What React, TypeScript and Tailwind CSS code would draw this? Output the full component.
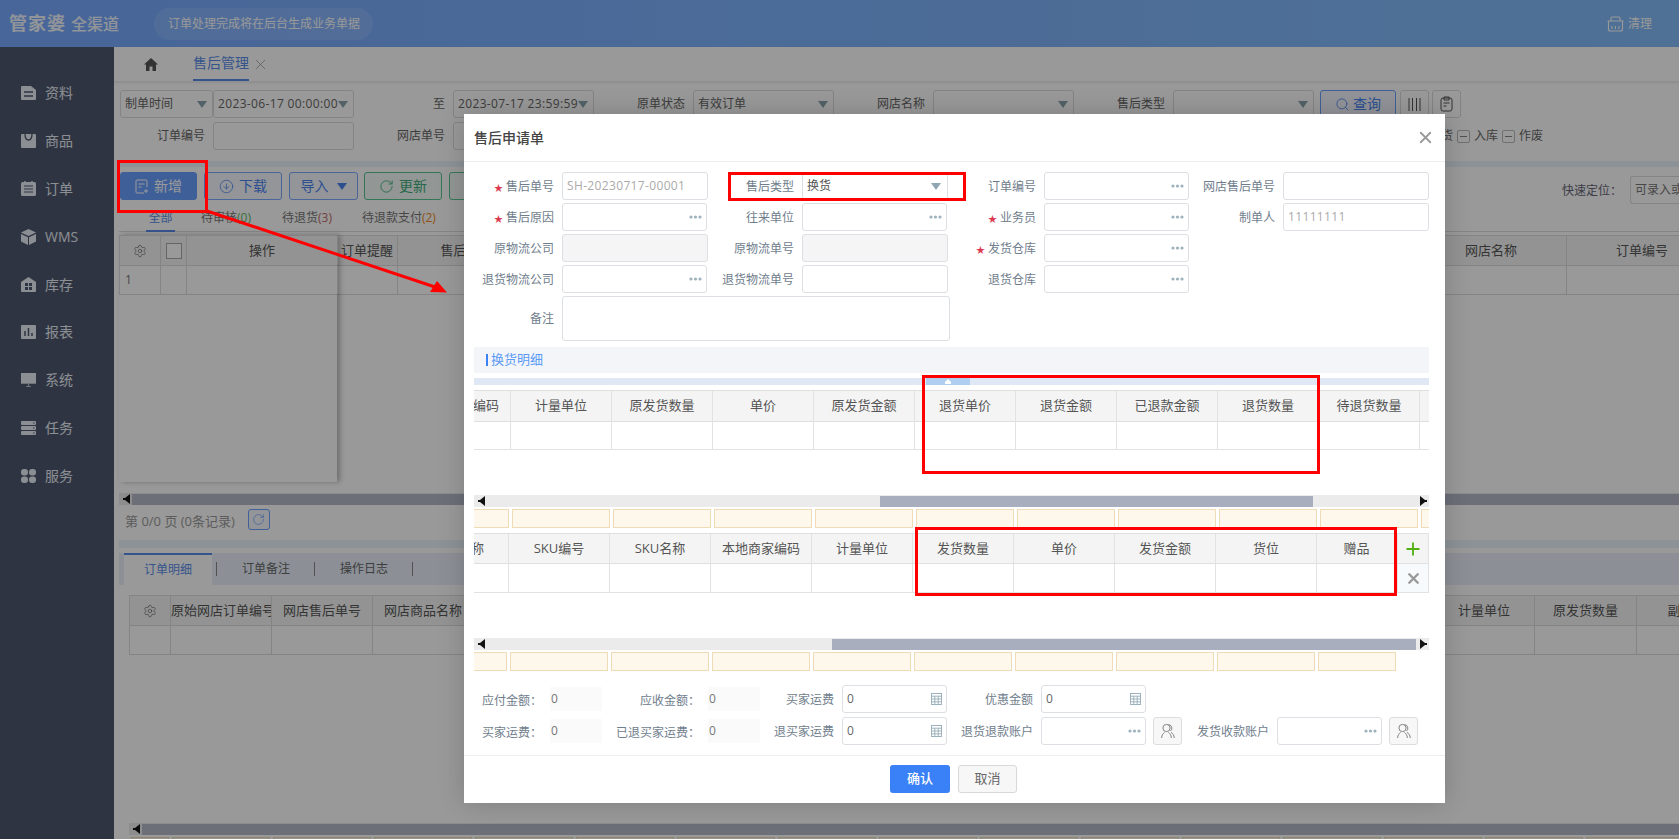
import React from "react";
import { X, Plus, Search, RotateCw, CircleArrowDown, Settings } from "lucide-react";

const Tri = ({ cls = "text-[#8fa6b3]" }: { cls?: string }) => (
  <svg width="10" height="7" viewBox="0 0 10 7" className={cls}><path d="M0 0h10L5 7z" fill="currentColor" /></svg>
);
const Dots = () => (
  <svg width="13" height="4" viewBox="0 0 13 4" className="text-[#9db2bd]"><circle cx="2" cy="2" r="1.6" fill="currentColor" /><circle cx="6.5" cy="2" r="1.6" fill="currentColor" /><circle cx="11" cy="2" r="1.6" fill="currentColor" /></svg>
);
const Calc = () => (
  <svg width="11" height="12" viewBox="0 0 11 12" className="text-[#9db2bd]" fill="none" stroke="currentColor"><rect x=".5" y=".5" width="10" height="11" /><path d="M.5 3.2h10M.5 6h10M.5 8.8h10M3.8 3.2v8.3M7.2 3.2v8.3" /></svg>
);
const People = () => (
  <svg width="14" height="16" viewBox="0 0 14 16" fill="none" stroke="#777" strokeWidth=".9"><circle cx="5.5" cy="5" r="3.6" /><path d="M7.5 1.6a3.6 3.6 0 0 1 2 6.4M.6 15c.2-3 1.6-4.7 3-5.6M7.4 9.4c1.4.9 2.8 2.6 3 5.6M10 9.4c1.7.9 3 2.6 3.3 5.6" /></svg>
);
const Arrow = ({ right }: { right?: boolean }) => (
  <svg width="8" height="10" viewBox="0 0 8 10" className={right ? "rotate-180" : ""}><path d="M0 4h2L7 0v10L2 6H0z" fill="#111" /></svg>
);
const Gear = () => <Settings size={14} strokeWidth={1} className="text-[#555]" />;

const SideIcon = ({ k }: { k: number }) => {
  const bg = "#4e586e";
  const g = [
    <g key="0"><path d="M1 1h9l5 4v9a1 1 0 0 1-1 1H1a1 1 0 0 1-1-1V2a1 1 0 0 1 1-1z" fill="currentColor" /><path d="M3 7h9M3 11h9" stroke={bg} strokeWidth="1.6" /></g>,
    <g key="1"><rect y="1" width="15" height="14" rx="1" fill="currentColor" /><path d="M4 1c0 4 1.5 6 3.5 6S11 5 11 1" fill="none" stroke={bg} strokeWidth="1.3" /></g>,
    <g key="2"><rect y="1" width="15" height="14" rx="1.5" fill="currentColor" /><path d="M3 5h9M3 8h9M3 11h9" stroke={bg} strokeWidth="1.2" /><path d="M4 0v2M11 0v2" stroke="currentColor" strokeWidth="1.5" /></g>,
    <g key="3"><path d="M7.5 0L15 3.5 7.5 7 0 3.5z" fill="currentColor" /><path d="M0 5l7 3.3V16L0 12.5zM15 5L8 8.3V16l7-3.5z" fill="currentColor" /></g>,
    <g key="4"><path d="M7.5 0L15 5v9a1 1 0 0 1-1 1H1a1 1 0 0 1-1-1V5z" fill="currentColor" /><path d="M4 6h3v3H4zM8 6h3v3H8zM4 10h3v3H4zM8 10h3v3H8z" fill={bg} /></g>,
    <g key="5"><rect y="1" width="15" height="14" rx="1" fill="currentColor" /><path d="M4 12V7M7.5 12V4M11 12V9" stroke={bg} strokeWidth="1.5" /></g>,
    <g key="6"><path d="M0 1h15v10H0z" fill="currentColor" /><path d="M0 11.5h15M5 14.5h5M7.5 12v2" stroke="currentColor" strokeWidth="1.2" opacity=".7" /></g>,
    <g key="7"><rect y="1" width="15" height="4" rx="1" fill="currentColor" /><rect y="6" width="15" height="4" rx="1" fill="currentColor" /><rect y="11" width="15" height="4" rx="1" fill="currentColor" /><path d="M12 3h1.5M12 8h1.5M12 13h1.5" stroke={bg} /></g>,
    <g key="8"><rect x="0" y="1" width="7" height="6.5" rx="3" fill="currentColor" /><rect x="8" y="1" width="7" height="6.5" rx="3" fill="currentColor" /><rect x="0" y="8.5" width="7" height="6.5" rx="3" fill="currentColor" /><rect x="8" y="8.5" width="7" height="6.5" rx="3" fill="currentColor" /></g>,
  ];
  return <svg width="15" height="16" viewBox="0 0 15 16" className="shrink-0">{g[k]}</svg>;
};

const BgBox = ({ w, text, arrow, latin }: { w: string; text?: string; arrow?: boolean; latin?: boolean }) => (
  <div className={`${w} h-[28px] shrink-0 border border-[#ddd] rounded-[3px] bg-white flex items-center justify-between pl-[4px] pr-[5px] text-xs text-[#666] whitespace-nowrap`}>
    <span className={latin ? "tracking-[0.35px]" : ""}>{text}</span>
    {arrow && <Tri cls="text-[#8aa3b0]" />}
  </div>
);
const BgLabel = ({ w, t }: { w: string; t: string }) => (
  <div className={`${w} shrink-0 pr-[8px] text-right text-xs text-[#666] whitespace-nowrap`}>{t}</div>
);
const ToolBtn = ({ w, cls, children }: { w: string; cls: string; children: React.ReactNode }) => (
  <div className={`${w} h-[28px] shrink-0 rounded-[3px] border flex items-center justify-center gap-[5px] text-sm ${cls}`}>{children}</div>
);
const HCell = ({ w, t, cls = "" }: { w: string; t?: React.ReactNode; cls?: string }) => (
  <div className={`${w} h-full shrink-0 border-r border-[#dcdcdc] flex items-center justify-center text-[13px] text-[#555] whitespace-nowrap overflow-hidden ${cls}`}>{t}</div>
);

const Sidebar = () => (
  <div className="w-[114px] shrink-0 bg-[#4e586e] pt-[22px] flex flex-col text-[#e8edf5]">
    {["资料", "商品", "订单", "WMS", "库存", "报表", "系统", "任务", "服务"].map((t, i) => (
      <div key={t} className="h-[47.9px] flex items-center pl-[21px] gap-[9px] text-sm"><SideIcon k={i} /><span>{t}</span></div>
    ))}
  </div>
);

const Background = () => (
  <div className="w-[1679px] h-[839px] flex flex-col overflow-hidden bg-white">
    <div className="h-[47px] shrink-0 bg-gradient-to-r from-[#78aaff] to-[#84bcfa] flex items-center text-[#fff]">
      <div className="pl-[9px] w-[154px] flex items-baseline gap-[5px] text-white/90">
        <span className="text-[18px] font-bold tracking-[1px]">管家婆</span>
        <span className="text-[16px] font-medium">全渠道</span>
      </div>
      <div className="w-[219px] h-[32px] rounded-full bg-white/10 flex items-center pl-[14px] text-xs">订单处理完成将在后台生成业务单据</div>
      <div className="ml-auto flex items-center gap-[4px] text-xs mr-[-4px]">
        <svg width="17" height="16" viewBox="0 0 17 16" fill="none" stroke="currentColor" strokeWidth="1.1"><path d="M1.5 5h14v8a2 2 0 0 1-2 2h-10a2 2 0 0 1-2-2zM.5 5h16M4 5V2.5A1.5 1.5 0 0 1 5.5 1h6A1.5 1.5 0 0 1 13 2.5V5M5 10v3M8.5 10v3M12 10v3" /></svg>
        <span>清理</span>
        <span className="ml-[24px] w-[3px] h-[14px] border-l border-t border-white/80 rounded-tl" />
      </div>
    </div>
    <div className="flex-1 flex min-h-0">
      <Sidebar />
      <div className="flex-1 min-w-0 flex flex-col">
        {/* tab strip */}
        <div className="h-[35px] shrink-0 flex items-center pl-[30px] border-b border-[#eee] shadow-[0_1px_2px_rgba(0,0,0,.08)]">
          <svg width="14" height="13" viewBox="0 0 14 13"><path d="M7 0l7 6.5h-2V13H8.5V8.5h-3V13H2V6.5H0z" fill="#555" /></svg>
          <div className="ml-[35px] h-full flex items-center text-sm text-[#5b8dea] border-b-2 border-[#5b8dea]">售后管理</div>
          <X size={17} strokeWidth={0.9} className="ml-[3px] text-[#888]" />
        </div>
        {/* filters */}
        <div className="h-[79px] shrink-0 pl-[6px] pt-[8px] flex flex-col gap-[4px]">
          <div className="flex items-center">
            <BgBox w="w-[93px]" text="制单时间" arrow />
            <BgBox w="w-[141px]" text="2023-06-17 00:00:00" arrow latin />
            <BgLabel w="w-[99px]" t="至" />
            <BgBox w="w-[141px]" text="2023-07-17 23:59:59" arrow latin />
            <BgLabel w="w-[99px]" t="原单状态" />
            <BgBox w="w-[141px]" text="有效订单" arrow />
            <BgLabel w="w-[99px]" t="网店名称" />
            <BgBox w="w-[141px]" arrow />
            <BgLabel w="w-[99px]" t="售后类型" />
            <BgBox w="w-[141px]" arrow />
            <div className="ml-[6px] w-[76px] h-[28px] rounded-[3px] border border-[#6ca0ff] bg-[#f3f7ff] flex items-center justify-center gap-[3px] text-sm text-[#4a84f0]"><Search size={15} strokeWidth={1.3} />查询</div>
            <div className="ml-[4px] w-[29px] h-[28px] rounded-[3px] border border-[#ddd] flex items-center justify-center"><svg width="13" height="15" viewBox="0 0 13 15" fill="none" stroke="#555"><path d="M1 1v13M4.5 1v13M8.5 1v13M12 1v13" /></svg></div>
            <div className="ml-[3px] w-[29px] h-[28px] rounded-[3px] border border-[#ddd] flex items-center justify-center"><svg width="13" height="16" viewBox="0 0 13 16" fill="none" stroke="#555"><rect x="1" y="2" width="11" height="13" rx="2" /><path d="M4 1h5v3H4zM3.5 7h6M3.5 10h3" /></svg></div>
          </div>
          <div className="flex items-center">
            <BgLabel w="w-[93px]" t="订单编号" />
            <BgBox w="w-[141px]" />
            <BgLabel w="w-[99px]" t="网店单号" />
            <BgBox w="w-[141px]" />
            <div className="ml-[835px] flex items-center gap-[4px] text-xs text-[#666] whitespace-nowrap">
              <span>退货</span>
              <span className="w-[13px] h-[13px] border border-[#bbb] rounded-[2px] flex items-center justify-center"><span className="w-[7px] h-px bg-[#888]" /></span>
              <span>入库</span>
              <span className="w-[13px] h-[13px] border border-[#bbb] rounded-[2px] flex items-center justify-center"><span className="w-[7px] h-px bg-[#888]" /></span>
              <span>作废</span>
            </div>
          </div>
        </div>
        <div className="h-[6px] ml-[5px] shrink-0 bg-[#ecf3fb]" />
        {/* toolbar */}
        <div className="h-[38px] shrink-0 pl-[6px] pt-[5px] flex">
          <ToolBtn w="w-[77px]" cls="bg-[#6a9fff] border-[#6a9fff] text-white">
            <svg width="14" height="15" viewBox="0 0 14 15" fill="none" stroke="currentColor"><path d="M9 14H2a1 1 0 0 1-1-1V2a1 1 0 0 1 1-1h9a1 1 0 0 1 1 1v6M3.5 5h6M3.5 8h3M11 10v4M9 12h4" /></svg>新增
          </ToolBtn>
          <ToolBtn w="w-[78px] ml-[7px]" cls="bg-[#f5f8ff] border-[#7ba9ff] text-[#4a84f0]"><CircleArrowDown size={15} strokeWidth={1.2} />下载</ToolBtn>
          <ToolBtn w="w-[69px] ml-[7px]" cls="bg-[#f5f8ff] border-[#7ba9ff] text-[#4a84f0]">导入<span className="ml-[3px]"><Tri cls="text-[#4a84f0]" /></span></ToolBtn>
          <ToolBtn w="w-[78px] ml-[6px]" cls="bg-[#f3fbf7] border-[#58c593] text-[#3fae7b]"><RotateCw size={15} strokeWidth={1.4} />更新</ToolBtn>
          <ToolBtn w="w-[78px] ml-[7px]" cls="bg-[#f3fbf7] border-[#58c593] text-[#3fae7b]">审核</ToolBtn>
          <div className="ml-auto mt-[4px] flex items-start text-xs">
            <span className="pt-[7px] text-[#667] mr-[8px] whitespace-nowrap">快速定位：</span>
            <div className="w-[49px] h-[28px] border border-r-0 border-[#ddd] rounded-l-[3px] pl-[4px] flex items-center text-[#777] whitespace-nowrap overflow-hidden">可录入或</div>
          </div>
        </div>
        {/* status tabs */}
        <div className="h-[27px] ml-[5px] shrink-0 flex items-end border-b border-[#ddd] text-xs text-[#777]">
          <div className="ml-[27px] w-[29px] h-[27px] flex items-center justify-center text-[#5b8dea] border-b-2 border-[#5b8dea] -mb-px">全部</div>
          <div className="ml-[26px] h-[26px] flex items-center whitespace-nowrap">待审核<span className="text-[#5cb85c]">(0)</span></div>
          <div className="ml-[31px] h-[26px] flex items-center whitespace-nowrap">待退货<span className="text-[#c46a6a]">(3)</span></div>
          <div className="ml-[30px] h-[26px] flex items-center whitespace-nowrap">待退款支付<span className="text-[#f08a24]">(2)</span></div>
        </div>
        {/* main table */}
        <div className="h-[258px] shrink-0 ml-[5px] mt-[3px] flex">
          <div className="relative w-[218px] shrink-0 h-[247px] shadow-[3px_0_5px_rgba(0,0,0,.28)] bg-white flex flex-col">
            <div className="h-[31px] shrink-0 flex bg-[#f5f5f5] border-y border-l border-[#dcdcdc]">
              <HCell w="w-[41px]" t={<Gear />} />
              <HCell w="w-[26px]" t={<span className="w-[16px] h-[16px] bg-white border border-[#aaa]" />} />
              <HCell w="w-[151px]" t="操作" />
            </div>
            <div className="h-[29px] shrink-0 flex border-b border-l border-[#dcdcdc]">
              <HCell w="w-[41px]" t={<span className="text-[#777] w-full pl-[5px] text-xs">1</span>} />
              <HCell w="w-[26px]" />
              <HCell w="w-[151px]" />
            </div>
          </div>
          <div className="flex-1 min-w-0 flex flex-col">
            <div className="h-[31px] shrink-0 flex bg-[#f5f5f5] border-y border-[#dcdcdc]">
              <HCell w="w-[61px]" t="订单提醒" />
              <HCell w="w-[151px]" t="售后申请单" />
              <HCell w="w-[867px]" />
              <HCell w="w-[151px]" t="网店名称" />
              <HCell w="w-[151px]" t="订单编号" />
            </div>
            <div className="h-[29px] shrink-0 flex border-b border-[#dcdcdc]">
              <HCell w="w-[61px]" /><HCell w="w-[151px]" /><HCell w="w-[867px]" /><HCell w="w-[151px]" /><HCell w="w-[151px]" />
            </div>
          </div>
        </div>
        <div className="h-[12px] ml-[5px] shrink-0 bg-[#ebebeb] flex items-center pl-[4px]"><Arrow /><div className="ml-[1px] flex-1 h-[11px] bg-[#b4b9c8]" /></div>
        {/* pagination */}
        <div className="h-[35px] shrink-0 pl-[11px] flex items-start pt-[4px] text-[13px] text-[#999]">
          <span className="pt-[3px] whitespace-nowrap">第 0/0 页 (0条记录)</span>
          <div className="ml-[13px] w-[22px] h-[21px] border border-[#6ca0ff] rounded-[3px] bg-[#f5f8ff] flex items-center justify-center text-[#6ca0ff]"><RotateCw size={13} strokeWidth={1.3} /></div>
        </div>
        <div className="h-[8px] ml-[5px] shrink-0 bg-[#ecf3fb]" />
        <div className="h-[32px] ml-[5px] mt-[5px] shrink-0 bg-[#e9f0fb] flex items-center text-xs text-[#666] pl-[5px]">
          <div className="w-[88px] h-full bg-white border-t-2 border-[#5b8dea] text-[#5b8dea] flex items-center justify-center">订单明细</div>
          <span className="ml-[4px] w-px h-[14px] bg-[#888]" />
          <span className="ml-[25px]">订单备注</span>
          <span className="ml-[24px] w-px h-[14px] bg-[#888]" />
          <span className="ml-[25px]">操作日志</span>
          <span className="ml-[24px] w-px h-[14px] bg-[#888]" />
        </div>
        <div className="h-[60px] ml-[15px] mt-[10px] shrink-0 flex flex-col">
          <div className="h-[31px] shrink-0 flex bg-[#f5f5f5] border-y border-l border-[#dcdcdc]">
            <HCell w="w-[41px]" t={<Gear />} />
            <HCell w="w-[101px]" t="原始网店订单编号" cls="!justify-start" />
            <HCell w="w-[101px]" t="网店售后单号" />
            <HCell w="w-[101px]" t="网店商品名称" />
            <HCell w="w-[960px]" />
            <HCell w="w-[101px]" t="计量单位" />
            <HCell w="w-[102px]" t="原发货数量" />
            <HCell w="w-[101px]" t="副单位" />
          </div>
          <div className="h-[29px] shrink-0 flex border-b border-l border-[#dcdcdc]">
            <HCell w="w-[41px]" /><HCell w="w-[101px]" /><HCell w="w-[101px]" /><HCell w="w-[101px]" /><HCell w="w-[960px]" /><HCell w="w-[101px]" /><HCell w="w-[102px]" /><HCell w="w-[101px]" />
          </div>
        </div>
        <div className="h-[12px] ml-[15px] mt-[168px] shrink-0 bg-[#ebebeb] flex items-center pl-[4px]"><Arrow /><div className="ml-[1px] flex-1 h-[11px] bg-[#b4b9c8]" /></div>
        <div className="ml-[17px] mt-[2px] flex gap-[3px]">
          {["w-[38px]", "w-[98px]", "w-[98px]", "w-[98px]", "w-[98px]", "w-[98px]", "w-[98px]", "w-[98px]", "w-[98px]", "w-[98px]", "w-[98px]", "w-[98px]", "w-[98px]", "w-[98px]", "w-[98px]", "w-[98px]", "w-[98px]"].map((w, i) => (
            <div key={i} className={`${w} h-[19px] shrink-0 border border-[#efdcb6] bg-[#fef8ec]`} />
          ))}
        </div>
      </div>
    </div>
  </div>
);

/* ---------- modal ---------- */
const Star = () => <span className="text-[#dc3a50] text-[9px] mr-[3px] leading-none">★</span>;

const Field = ({ lw, iw, label, req, kind = "plain", value }: { lw: string; iw: string; label: string; req?: boolean; kind?: "plain" | "lookup" | "disabled" | "calc"; value?: string }) => (
  <div className="flex items-center shrink-0">
    <div className={`${lw} shrink-0 text-right pt-[1px] pr-[8px] text-xs text-[#6f7d8c] whitespace-nowrap`}>{req && <Star />}{label}</div>
    <div className={`${iw} h-[28px] shrink-0 border border-[#dcdfe3] rounded-[3px] flex items-center justify-between pl-[4px] pr-[4px] text-xs ${kind === "disabled" ? "bg-[#f5f5f5]" : "bg-white"} ${value === "0" ? "text-[#666]" : "text-[#aaa]"}`}>
      <span className="tracking-[0.35px]">{value}</span>
      {kind === "lookup" && <Dots />}
      {kind === "calc" && <Calc />}
    </div>
  </div>
);
const W146 = "w-[146px]", W145 = "w-[145px]";
const L98 = "w-[98px]", L94 = "w-[94px]", L95 = "w-[95px]", L96 = "w-[96px]", L97 = "w-[97px]";

const Form = () => (
  <div className="flex flex-col gap-[3px] pt-[10px]">
    <div className="flex h-[28px]">
      <Field lw={L98} iw={W146} label="售后单号" req value="SH-20230717-00001" />
      <div className="flex items-center shrink-0">
        <div className="w-[94px] text-right pt-[1px] pr-[8px] text-xs text-[#6f7d8c]">售后类型</div>
        <div className="w-[146px] h-[28px] border border-[#dcdfe3] rounded-[3px] flex items-center justify-between pl-[4px] pr-[6px] text-xs text-[#555]"><span>换货</span><Tri /></div>
      </div>
      <Field lw={L96} iw={W145} label="订单编号" kind="lookup" />
      <Field lw={L94} iw={W146} label="网店售后单号" />
    </div>
    <div className="flex h-[28px]">
      <Field lw={L98} iw={W145} label="售后原因" req kind="lookup" />
      <Field lw={L95} iw={W145} label="往来单位" kind="lookup" />
      <Field lw={L97} iw={W145} label="业务员" req kind="lookup" />
      <Field lw={L94} iw={W146} label="制单人" value="11111111" />
    </div>
    <div className="flex h-[28px]">
      <Field lw={L98} iw={W146} label="原物流公司" kind="disabled" />
      <Field lw={L94} iw={W146} label="原物流单号" kind="disabled" />
      <Field lw={L96} iw={W145} label="发货仓库" req kind="lookup" />
    </div>
    <div className="flex h-[28px]">
      <Field lw={L98} iw={W145} label="退货物流公司" kind="lookup" />
      <Field lw={L95} iw={W146} label="退货物流单号" />
      <Field lw={L96} iw={W145} label="退货仓库" kind="lookup" />
    </div>
    <div className="flex items-center h-[45px]">
      <div className="w-[98px] text-right pt-[1px] pr-[8px] text-xs text-[#6f7d8c]">备注</div>
      <div className="w-[388px] h-[45px] border border-[#dcdfe3] rounded-[3px]" />
    </div>
  </div>
);

const TH = ({ w = "w-[101px]", t }: { w?: string; t?: string }) => (
  <div className={`${w} h-full shrink-0 border-r border-[#e2e2e2] flex items-center justify-center text-[13px] text-[#555] whitespace-nowrap`}>{t}</div>
);
const Bar = ({ ml, w }: { ml: string; w: string }) => (
  <div className="h-[12px] bg-[#ebebeb] flex items-center relative">
    <div className="w-[16px] flex justify-center shrink-0"><Arrow /></div>
    <div className={`${ml} ${w} h-[11px] bg-[#a8aebd] shrink-0`} />
    <div className="ml-auto w-[13px] flex justify-center shrink-0"><Arrow right /></div>
  </div>
);
const YellowRow = ({ ml, widths }: { ml: string; widths: string[] }) => (
  <div className="h-[19px] mt-[2px] overflow-hidden">
    <div className={`${ml} flex gap-[3px]`}>
      {widths.map((w, i) => <div key={i} className={`${w} h-[19px] shrink-0 border border-[#efdcb6] bg-[#fef8ec]`} />)}
    </div>
  </div>
);

const t1 = ["本地商家编码", "计量单位", "原发货数量", "单价", "原发货金额", "退货单价", "退货金额", "已退款金额", "退货数量", "待退货数量", ""];
const t2 = ["商品名称", "SKU编号", "SKU名称", "本地商家编码", "计量单位", "发货数量", "单价", "发货金额", "货位"];
const w98 = "w-[98px]";

const Details = () => (
  <div className="pl-[10px] pr-[16px]">
    <div className="h-[26px] mt-[6px] bg-[#f3f5f9] flex items-center pl-[12px] text-[13px] text-[#5b9bf5] gap-[3px]"><span className="w-[2px] h-[12px] bg-[#3b82f6]" />换货明细</div>
    <div className="h-[7px] mt-[5px] bg-[#dfe8f4] pl-[452px]">
      <div className="w-[44px] h-[7px] bg-[#b0ceef] flex justify-center items-center"><svg width="6" height="5" viewBox="0 0 6 5"><path d="M3 0l3 3v2H0V3z" fill="#fff" /></svg></div>
    </div>
    <div className="mt-[5px] h-[60px] overflow-hidden">
      <div className="-ml-[64px] flex flex-col w-[1200px]">
        <div className="h-[32px] flex bg-[#f4f4f4] border-y border-[#dfdfdf]">{t1.map((t, i) => <TH key={i} t={t} />)}</div>
        <div className="h-[28px] flex border-b border-[#e2e2e2]">{t1.map((_, i) => <TH key={i} />)}</div>
      </div>
    </div>
    <div className="mt-[45px]"><Bar ml="ml-[390px]" w="w-[433px]" /></div>
    <YellowRow ml="-ml-[63px]" widths={[w98, w98, w98, w98, w98, w98, w98, w98, w98, w98, w98]} />
    <div className="mt-[5px] h-[60px] flex">
      <div className="w-[923px] overflow-hidden shrink-0">
        <div className="-ml-[66px] flex flex-col w-[989px]">
          <div className="h-[31px] flex bg-[#f4f4f4] border-y border-[#dfdfdf]">{t2.map((t, i) => <TH key={i} t={t} />)}<TH w="w-[80px]" t="赠品" /></div>
          <div className="h-[29px] flex border-b border-[#e2e2e2]">{t2.map((_, i) => <TH key={i} />)}<TH w="w-[80px]" /></div>
        </div>
      </div>
      <div className="w-[32px] shrink-0 flex flex-col border border-[#e2e2e2] bg-[#f7fafc]">
        <div className="h-[30px] flex items-center justify-center border-b border-[#e2e2e2] bg-[#f4f4f4]"><Plus size={20} strokeWidth={2.2} className="text-[#52b013]" /></div>
        <div className="flex-1 flex items-center justify-center"><X size={17} strokeWidth={3.4} className="text-[#999]" /></div>
      </div>
    </div>
    <div className="mt-[45px]"><Bar ml="ml-[342px]" w="w-[584px]" /></div>
    <YellowRow ml="-ml-[65px]" widths={[w98, w98, w98, w98, w98, w98, w98, w98, w98, "w-[78px]"]} />
  </div>
);

const Val = ({ lw, t }: { lw: string; t: string }) => (
  <div className="flex items-center shrink-0">
    <div className={`${lw} shrink-0 text-right pt-[3px] pr-[8px] text-xs text-[#6f7d8c] whitespace-nowrap`}>{t}</div>
    <div className="w-[52px] h-[24px] bg-[#fafafa] pl-[1px] flex items-center text-xs text-[#777]">0</div>
  </div>
);
const PBtn = () => (
  <div className="w-[29px] h-[28px] ml-[7px] shrink-0 bg-[#f7f7f7] border border-[#ddd] rounded-[3px] flex items-center justify-center"><People /></div>
);
const Totals = () => (
  <div className="mt-[14px] flex flex-col gap-[4px] pl-[10px]">
    <div className="flex h-[28px]">
      <Val lw="w-[76px]" t="应付金额：" />
      <Val lw="w-[106px]" t="应收金额：" />
      <Field lw="w-[82px]" iw="w-[105px]" label="买家运费" kind="calc" value="0" />
      <Field lw="w-[94px]" iw="w-[105px]" label="优惠金额" kind="calc" value="0" />
    </div>
    <div className="flex h-[28px]">
      <Val lw="w-[76px]" t="买家运费：" />
      <Val lw="w-[106px]" t="已退买家运费：" />
      <Field lw="w-[82px]" iw="w-[105px]" label="退买家运费" kind="calc" value="0" />
      <Field lw="w-[94px]" iw="w-[105px]" label="退货退款账户" kind="lookup" />
      <PBtn />
      <Field lw="w-[95px]" iw="w-[105px]" label="发货收款账户" kind="lookup" />
      <PBtn />
    </div>
  </div>
);

const Modal = () => (
  <div className="absolute left-[464px] top-[114px] w-[981px] h-[689px] bg-white shadow-[0_0_25px_rgba(0,0,0,.18)] flex flex-col [font-family:'Open_Sans','Noto_Sans_CJK_SC',sans-serif]">
    <div className="h-[48px] shrink-0 border-b border-[#eee] flex items-center justify-between pl-[10px] pr-[10px]">
      <span className="text-sm font-medium text-[#444]">售后申请单</span>
      <X size={19} strokeWidth={2.3} className="text-[#999]" />
    </div>
    <Form />
    <Details />
    <Totals />
    <div className="mt-[10px] flex-1 border-t border-[#eee] flex items-start justify-center pt-[9px] gap-[8px] pr-[2px]">
      <div className="w-[60px] h-[28px] bg-[#3a80f6] rounded-[3px] text-white text-[13px] font-medium flex items-center justify-center">确认</div>
      <div className="w-[59px] h-[28px] bg-[#f7f7f7] border border-[#d8d8d8] rounded-[3px] text-[#666] text-[13px] flex items-center justify-center">取消</div>
    </div>
  </div>
);

export default function App() {
  return (
    <div className="relative w-[1679px] h-[839px] overflow-hidden [font-family:'Open_Sans','Noto_Sans_CJK_SC',sans-serif]">
      <Background />
      <div className="absolute inset-0 bg-black/40" />
      <Modal />
      <div className="absolute left-[117px] top-[160px] w-[91px] h-[53px] border-[3px] border-[#f00]" />
      <div className="absolute left-[728px] top-[172px] w-[238px] h-[29px] border-[3px] border-[#f00]" />
      <div className="absolute left-[922px] top-[375px] w-[398px] h-[99px] border-[3px] border-[#f00]" />
      <div className="absolute left-[915px] top-[527px] w-[482px] h-[69px] border-[3px] border-[#f00]" />
      <svg className="absolute left-0 top-0" width="1679" height="839"><path d="M207 211L435 287" stroke="#f00" strokeWidth="3" /><path d="M447 292.5L430 292L437 281z" fill="#f00" /></svg>
    </div>
  );
}
